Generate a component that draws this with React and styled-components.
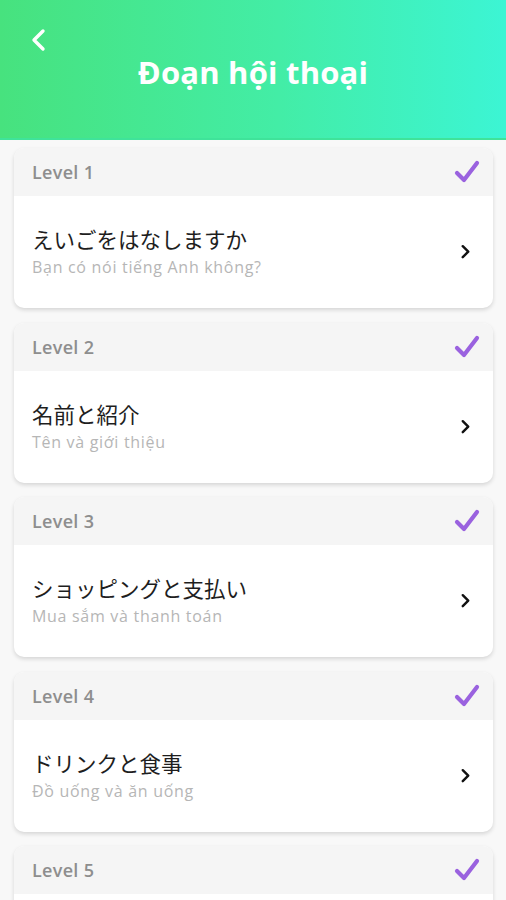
import styled, { createGlobalStyle } from "styled-components";

const GlobalStyle = createGlobalStyle`
  html, body {
    margin: 0;
    padding: 0;
    background: #f8f8f8;
    font-family: "Open Sans", "Noto Sans", "Noto Sans CJK JP", sans-serif;
  }
`;

const Page = styled.div`
  width: 506px;
  height: 900px;
  overflow: hidden;
  background: #f8f8f8;
`;

const Header = styled.header`
  height: 138px;
  background: linear-gradient(90deg, #47e27e 0%, #43eda6 55%, #3cf5d4 100%);
  border-bottom: 2px solid #3fe39a;
  display: grid;
  grid-template-rows: 50px 1fr;
  padding: 0 24px;
  box-sizing: content-box;
`;

const BackButton = styled.button`
  background: none;
  border: none;
  padding: 0;
  margin-top: 26px;
  width: 28px;
  height: 28px;
  display: flex;
  align-items: center;
  justify-content: center;
  cursor: pointer;
`;

const Title = styled.h1`
  margin: 0;
  margin-top: 1px;
  text-align: center;
  color: #ffffff;
  font-size: 31px;
  font-weight: 700;
  letter-spacing: 0.2px;
`;

const List = styled.div`
  display: flex;
  flex-direction: column;
  gap: 14.5px;
  padding: 8px 13px 0 14px;
`;

const Card = styled.div`
  background: #ffffff;
  border-radius: 10px;
  overflow: hidden;
  flex-shrink: 0;
  box-shadow: 0 2px 4px rgba(0, 0, 0, 0.14);
`;

const CardHead = styled.div`
  height: 48px;
  background: #f5f5f5;
  display: flex;
  align-items: center;
  justify-content: space-between;
  padding: 0 12px 0 18px;
`;

const Level = styled.span`
  font-size: 18px;
  font-weight: 600;
  color: #8e8e8e;
  letter-spacing: 0.3px;
`;

const CardBody = styled.div`
  height: 112px;
  display: flex;
  align-items: center;
  justify-content: space-between;
  padding: 0 22px 0 18px;
`;

const Texts = styled.div`
  display: flex;
  flex-direction: column;
  gap: 5px;
`;

const Japanese = styled.div`
  font-family: "Noto Sans CJK JP", sans-serif;
  font-size: 21.5px;
  color: #1e1e1e;
  line-height: 26px;
`;

const Meaning = styled.div`
  font-size: 16px;
  color: #b6b6b6;
  line-height: 21px;
  letter-spacing: 0.7px;
`;

const Check = () => (
  <svg width="28" height="28" viewBox="0 0 28 28">
    <path
      d="M4 15 L11 22 L24 5"
      fill="none"
      stroke="#9a62df"
      strokeWidth="4.2"
      strokeLinecap="round"
      strokeLinejoin="round"
    />
  </svg>
);

const Chevron = ({ color = "#111", size = 14, width = 2.4 }) => (
  <svg width={size} height={size * 1.4} viewBox="0 0 10 14">
    <path
      d="M2.5 2 L7.5 7 L2.5 12"
      fill="none"
      stroke={color}
      strokeWidth={width}
      strokeLinecap="round"
      strokeLinejoin="round"
    />
  </svg>
);

const BackIcon = () => (
  <svg width="16" height="24" viewBox="0 0 16 24">
    <path
      d="M13 3 L4 12 L13 21"
      fill="none"
      stroke="#ffffff"
      strokeWidth="3.4"
      strokeLinecap="round"
      strokeLinejoin="round"
    />
  </svg>
);

// the fifth card is only partly on screen, so its body stays empty
const lessons = [
  { level: 1, jp: "えいごをはなしますか", vi: "Bạn có nói tiếng Anh không?" },
  { level: 2, jp: "名前と紹介", vi: "Tên và giới thiệu" },
  { level: 3, jp: "ショッピングと支払い", vi: "Mua sắm và thanh toán" },
  { level: 4, jp: "ドリンクと食事", vi: "Đồ uống và ăn uống" },
  { level: 5 },
];

export default function App() {
  return (
    <Page>
      <GlobalStyle />
      <Header>
        <BackButton aria-label="back">
          <BackIcon />
        </BackButton>
        <Title>Đoạn hội thoại</Title>
      </Header>
      <List>
        {lessons.map((l) => (
          <Card key={l.level}>
            <CardHead>
              <Level>Level {l.level}</Level>
              <Check />
            </CardHead>
            <CardBody>
              {l.jp && (
                <>
                  <Texts>
                    <Japanese>{l.jp}</Japanese>
                    <Meaning>{l.vi}</Meaning>
                  </Texts>
                  <Chevron size={11} width={2.2} />
                </>
              )}
            </CardBody>
          </Card>
        ))}
      </List>
    </Page>
  );
}
